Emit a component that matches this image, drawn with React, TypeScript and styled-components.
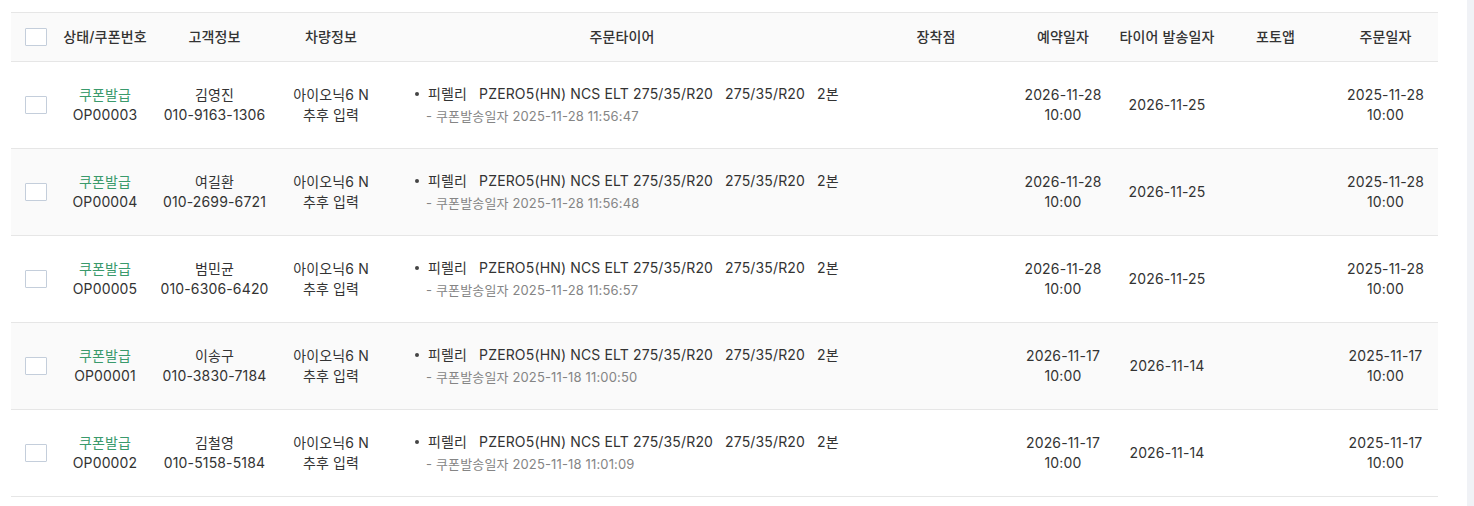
import React from 'react';
import styled, {createGlobalStyle} from 'styled-components';

const GlobalStyle = createGlobalStyle`
  html, body {
    margin: 0;
    padding: 0;
    background: #ffffff;
  }
  body {
    font-family: Inter, "Noto Sans CJK KR", "Noto Sans", sans-serif;
    color: #333333;
    font-size: 14px;
    letter-spacing: 0.15px;
  }
`;

type Order = {
    id: string;
    name: string;
    phone: string;
    couponDate: string;
    reserveDate: string;
    shipDate: string;
    orderDate: string;
};

const orders: Order[] = [
    {id: 'OP00003', name: '김영진', phone: '010-9163-1306', couponDate: '2025-11-28 11:56:47', reserveDate: '2026-11-28', shipDate: '2026-11-25', orderDate: '2025-11-28'},
    {id: 'OP00004', name: '여길환', phone: '010-2699-6721', couponDate: '2025-11-28 11:56:48', reserveDate: '2026-11-28', shipDate: '2026-11-25', orderDate: '2025-11-28'},
    {id: 'OP00005', name: '범민균', phone: '010-6306-6420', couponDate: '2025-11-28 11:56:57', reserveDate: '2026-11-28', shipDate: '2026-11-25', orderDate: '2025-11-28'},
    {id: 'OP00001', name: '이송구', phone: '010-3830-7184', couponDate: '2025-11-18 11:00:50', reserveDate: '2026-11-17', shipDate: '2026-11-14', orderDate: '2025-11-17'},
    {id: 'OP00002', name: '김철영', phone: '010-5158-5184', couponDate: '2025-11-18 11:01:09', reserveDate: '2026-11-17', shipDate: '2026-11-14', orderDate: '2025-11-17'},
];

const headers = ['상태/쿠폰번호', '고객정보', '차량정보', '주문타이어', '장착점', '예약일자', '타이어 발송일자', '포토앱', '주문일자'];

export default function App() {
    return (
        <>
            <GlobalStyle/>
            <Page>
                <Main>
                    <Table>
                        <HeaderRow>
                            <Cell><CheckBox/></Cell>
                            {headers.map(h => (
                                <HeadCell key={h}>{h}</HeadCell>
                            ))}
                        </HeaderRow>
                        {orders.map((o, i) => (
                            <Row key={o.id} $striped={i % 2 === 1}>
                                <Cell><CheckBox/></Cell>
                                <Cell>
                                    <Status>쿠폰발급</Status>
                                    <span>{o.id}</span>
                                </Cell>
                                <Cell>
                                    <span>{o.name}</span>
                                    <span>{o.phone}</span>
                                </Cell>
                                <Cell>
                                    <span>아이오닉6 N</span>
                                    <span>추후 입력</span>
                                </Cell>
                                <TireCell>
                                    <TireLine>
                                        <Dot/>
                                        <span>피렐리</span>
                                        <span>PZERO5(HN) NCS ELT 275/35/R20</span>
                                        <span>275/35/R20</span>
                                        <span>2본</span>
                                    </TireLine>
                                    <SubLine>- 쿠폰발송일자 {o.couponDate}</SubLine>
                                </TireCell>
                                <Cell/>
                                <Cell>
                                    <span>{o.reserveDate}</span>
                                    <span>10:00</span>
                                </Cell>
                                <Cell>
                                    <span>{o.shipDate}</span>
                                </Cell>
                                <Cell/>
                                <Cell>
                                    <span>{o.orderDate}</span>
                                    <span>10:00</span>
                                </Cell>
                            </Row>
                        ))}
                    </Table>
                </Main>
                <SideTrack/>
            </Page>
        </>
    );
}

const Page = styled.div`
  display: flex;
  min-height: 100vh;
`;

const Main = styled.div`
  flex: 1;
  padding: 12px 29px 0 11px;
`;

const SideTrack = styled.div`
  width: 7px;
  background: #f0f2f6;
`;

const Table = styled.div`
  width: 1427px;
  border-top: 1px solid #e6e6e6;
`;

const columns = '50px 88px 131px 102px 480px 148px 106px 102px 115px 105px';

const HeaderRow = styled.div`
  display: grid;
  grid-template-columns: ${columns};
  height: 48px;
  background: #fafafa;
  border-bottom: 1px solid #e6e6e6;
`;

const Row = styled.div<{ $striped: boolean }>`
  display: grid;
  grid-template-columns: ${columns};
  height: 86px;
  background: ${p => (p.$striped ? '#fafafa' : '#ffffff')};
  border-bottom: 1px solid #e6e6e6;
`;

const Cell = styled.div`
  display: flex;
  flex-direction: column;
  align-items: center;
  justify-content: center;
  line-height: 20px;
  white-space: nowrap;
`;

const HeadCell = styled(Cell)`
  font-weight: 500;
  color: #333333;
`;

const CheckBox = styled.span`
  display: block;
  box-sizing: border-box;
  width: 22px;
  height: 18px;
  border: 1.5px solid #c4cedb;
  background: #ffffff;
  border-radius: 1px;
`;

const Status = styled.span`
  color: #3a9a6c;
`;

const TireCell = styled.div`
  display: flex;
  flex-direction: column;
  justify-content: center;
  padding-left: 33px;
  white-space: nowrap;
`;

const TireLine = styled.div`
  display: flex;
  align-items: center;
  gap: 12px;
  line-height: 20px;
`;

const Dot = styled.span`
  width: 4px;
  height: 4px;
  border-radius: 50%;
  background: #444444;
  margin-right: -3px;
`;

const SubLine = styled.div`
  margin-top: 2px;
  padding-left: 11px;
  font-size: 13px;
  line-height: 20px;
  color: #858585;
`;
